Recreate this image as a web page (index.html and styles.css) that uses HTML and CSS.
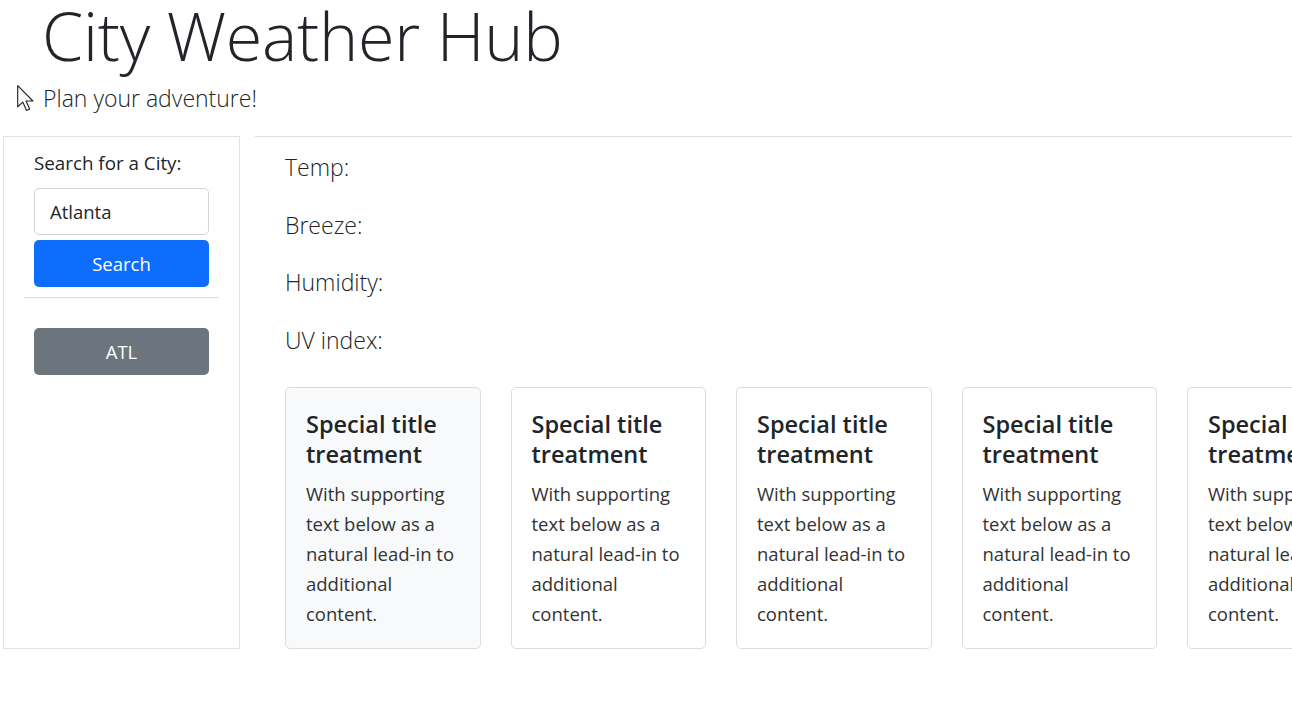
FILE: index.html
```html
<!DOCTYPE html>
<html lang="en">
<head>
<meta charset="utf-8">
<title>City Weather Hub</title>
<link rel="stylesheet" href="styles.css">
</head>
<body>
<header class="hero">
  <h1 class="title">City Weather Hub</h1>
  <p class="lead">Plan your adventure!</p>
  <svg class="cursor" width="21" height="29" viewBox="0 0 20 28" aria-hidden="true">
    <path d="M1.5 1.5 L1.5 22 L6.5 17.5 L10 25.5 L13 24.2 L9.6 16.4 L16.2 16.4 Z" fill="#fff" stroke="#222" stroke-width="1.1" stroke-linejoin="round"/>
  </svg>
</header>
<div class="layout">
  <aside class="sidebar">
    <label class="search-label" for="city">Search for a City:</label>
    <input class="search-input" id="city" type="text" value="Atlanta">
    <button class="btn btn-primary">Search</button>
    <hr class="divider">
    <button class="btn btn-secondary">ATL</button>
  </aside>
  <main class="main">
    <p class="stat">Temp:</p>
    <p class="stat">Breeze:</p>
    <p class="stat">Humidity:</p>
    <p class="stat">UV index:</p>
    <div class="cards">
      <div class="card card-light">
        <h5 class="card-title">Special title treatment</h5>
        <p class="card-text">With supporting text below as a natural lead-in to additional content.</p>
      </div>
      <div class="card">
        <h5 class="card-title">Special title treatment</h5>
        <p class="card-text">With supporting text below as a natural lead-in to additional content.</p>
      </div>
      <div class="card">
        <h5 class="card-title">Special title treatment</h5>
        <p class="card-text">With supporting text below as a natural lead-in to additional content.</p>
      </div>
      <div class="card">
        <h5 class="card-title">Special title treatment</h5>
        <p class="card-text">With supporting text below as a natural lead-in to additional content.</p>
      </div>
      <div class="card">
        <h5 class="card-title">Special title treatment</h5>
        <p class="card-text">With supporting text below as a natural lead-in to additional content.</p>
      </div>
    </div>
  </main>
</div>
</body>
</html>
```

FILE: styles.css
```css
html, body {
  margin: 0;
  padding: 0;
  background: #fff;
  overflow: hidden;
}
body {
  font-family: "Open Sans", "Noto Sans", sans-serif;
  color: #212529;
  width: 1292px;
  height: 727px;
}
.hero {
  position: relative;
  padding: 0 0 0 42px;
  height: 136px;
}
.title {
  margin: 0;
  font-size: 66.5px;
  font-weight: 300;
  line-height: 70px;
  letter-spacing: -0.3px;
}
.lead {
  margin: 10px 0 0 0;
  font-size: 23px;
  font-weight: 300;
  line-height: 36px;
  padding-left: 1px;
}
.cursor {
  position: absolute;
  left: 16px;
  top: 84px;
}
.layout {
  display: flex;
  align-items: stretch;
  gap: 15px;
  padding-left: 3px;
}
.sidebar {
  flex: 0 0 237px;
  box-sizing: border-box;
  border: 1px solid #e3e3e3;
  padding: 12px 30px 0 30px;
  display: flex;
  flex-direction: column;
}
.search-label {
  font-size: 18.8px;
  line-height: 28px;
  margin-bottom: 11px;
}
.search-input {
  box-sizing: border-box;
  width: 175px;
  height: 47px;
  border: 1px solid #ced4da;
  border-radius: 5px;
  padding: 0 15px;
  font-family: inherit;
  font-size: 18.5px;
  color: #212529;
  margin: 0;
}
.btn {
  box-sizing: border-box;
  width: 175px;
  height: 47px;
  border: none;
  border-radius: 5px;
  font-family: inherit;
  font-size: 18.5px;
  color: #fff;
  margin: 0;
}
.btn-primary {
  background: #0d6efd;
  margin-top: 5px;
}
.btn-secondary {
  background: #6c757d;
}
.divider {
  border: none;
  border-top: 1px solid #dcdcdc;
  margin: 10px -10px 30px -10px;
  height: 0;
}
.main {
  flex: 1 1 auto;
  border-top: 1px solid #dedede;
  padding: 12px 0 0 30px;
  min-width: 0;
}
.stat {
  margin: 0 0 20px 0;
  font-size: 23px;
  font-weight: 300;
  line-height: 37.5px;
  color: #212529;
}
.cards {
  display: flex;
  gap: 30px;
  margin-top: 28px;
}
.card {
  flex: 0 0 195.5px;
  box-sizing: border-box;
  border: 1px solid #dcdcdc;
  border-radius: 5px;
  background: #fff;
  padding: 21px 20px 18px 20px;
  height: 262px;
}
.card-light {
  background: #f8f9fa;
}
.card-title {
  margin: 0 0 10px 0;
  font-size: 23.5px;
  font-weight: 600;
  line-height: 30px;
  color: #212529;
}
.card-text {
  margin: 0;
  font-size: 18.5px;
  line-height: 30px;
  color: #333;
}
```
